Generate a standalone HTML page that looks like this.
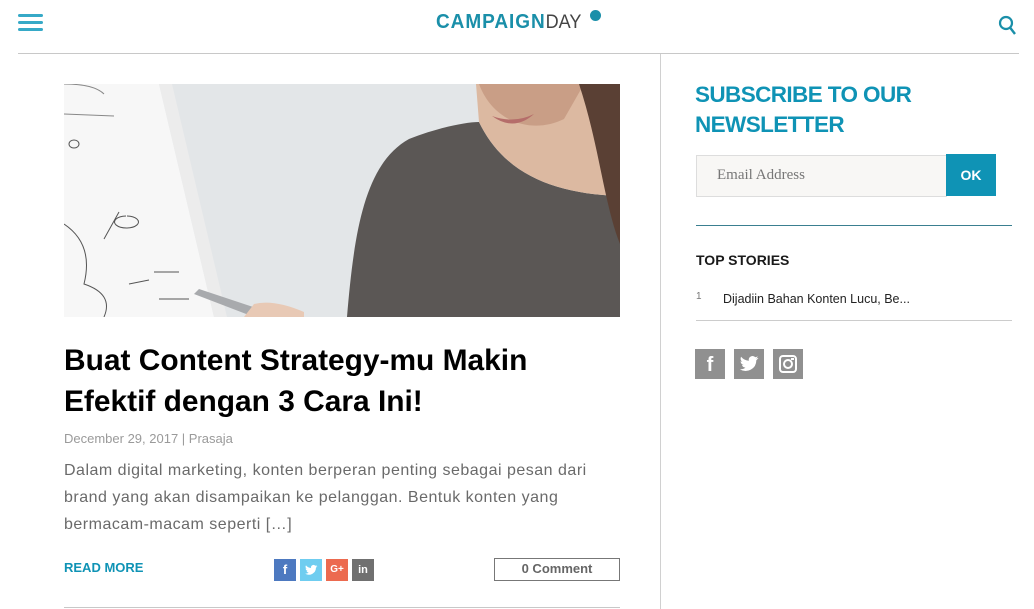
<!DOCTYPE html>
<html><head><meta charset="utf-8"><style>
*{margin:0;padding:0;box-sizing:border-box}
body{width:1034px;height:609px;overflow:hidden;background:#fff;font-family:"Liberation Sans",sans-serif;position:relative}
.a{position:absolute}
</style></head><body>
<!-- header -->
<div class="a" style="left:18px;top:14px;width:25px;height:3px;background:#36a9c7;border-radius:2px"></div>
<div class="a" style="left:18px;top:21px;width:25px;height:3px;background:#36a9c7;border-radius:2px"></div>
<div class="a" style="left:18px;top:28px;width:25px;height:3px;background:#36a9c7;border-radius:2px"></div>
<div class="a" style="left:436px;top:11px;font-size:20px;font-weight:bold;letter-spacing:1px;color:#1a8fa9;line-height:22px;transform:scaleX(0.95);transform-origin:left">CAMPAIGN<span style="font-weight:normal;color:#444;font-size:19px;letter-spacing:0">DAY</span></div>
<div class="a" style="left:590px;top:10px;width:11px;height:11px;border-radius:50%;background:#1a8fa9"></div>
<svg class="a" style="left:998px;top:15px" width="20" height="22"><circle cx="8" cy="8" r="6" fill="none" stroke="#1a8fa9" stroke-width="2.2"/><line x1="12" y1="12.5" x2="17" y2="19" stroke="#1a8fa9" stroke-width="2.4"/></svg>
<div class="a" style="left:18px;top:53px;width:1001px;height:1px;background:#c8c8c8"></div>
<div class="a" style="left:660px;top:54px;width:1px;height:555px;background:#d0d0d0"></div>
<!-- image -->
<svg class="a" style="left:64px;top:84px" width="556" height="233" viewBox="0 0 556 233">
<rect width="556" height="233" fill="#e3e6e8"/>
<polygon points="0,0 95,0 150,233 0,233" fill="#f7f7f7"/>
<polygon points="95,0 108,0 163,233 150,233" fill="#ececec"/>
<g stroke="#555" fill="none" stroke-width="1">
<ellipse cx="10" cy="60" rx="5" ry="4"/><path d="M40,155 L55,128 M62,132 a12,6 0 1,0 1,0 M65,200 L85,196 M90,188 l25,0 M95,215 l30 0"/><path d="M0,140 q30,20 20,60 q30,10 20,33"/></g>
<path d="M0,0 q30,0 40,10 M0,30 l50,2" stroke="#888" fill="none"/>
<polygon points="135,205 195,225 190,233 130,210" fill="#a8aaad"/>
<path d="M190,220 q20,-5 50,8 l0,5 l-60,0z" fill="#e8c9b5"/>
<path d="M283,233 C290,150 300,80 345,55 C370,45 400,38 415,38 C440,90 490,110 556,112 L556,233Z" fill="#5b5755"/>
<path d="M415,38 C440,90 490,110 556,112 L556,0 L412,0Z" fill="#dcb9a1"/>
<path d="M415,0 C430,40 470,50 500,35 L520,0Z" fill="#c99e86"/>
<path d="M428,32 q22,8 42,-2 q-20,18 -42,2z" fill="#b56d6a"/>
<path d="M515,0 L556,0 L556,160 C540,120 535,60 515,0Z" fill="#5a4034"/>
</svg>
<!-- article -->
<div class="a" style="left:64px;top:340px;font-size:29.9px;font-weight:bold;line-height:41px;color:#000;white-space:nowrap">Buat Content Strategy-mu Makin<br>Efektif dengan 3 Cara Ini!</div>
<div class="a" style="left:64px;top:431px;font-size:13px;color:#9a9a9a">December 29, 2017 | Prasaja</div>
<div class="a" style="left:64px;top:457px;font-size:16px;line-height:27px;color:#6a6a6a;letter-spacing:0.5px;white-space:nowrap">Dalam digital marketing, konten berperan penting sebagai pesan dari<br>brand yang akan disampaikan ke pelanggan. Bentuk konten yang<br>bermacam-macam seperti […]</div>
<div class="a" style="left:64px;top:560px;font-size:13px;font-weight:bold;color:#0f93b5">READ MORE</div>
<div class="a" style="left:274px;top:559px;width:22px;height:22px;background:#4d79c0;color:#fff;font-size:13px;font-weight:bold;text-align:center;line-height:22px">f</div>
<div class="a" style="left:300px;top:559px;width:22px;height:22px;background:#6fcdf0"><svg width="22" height="22" viewBox="0 0 24 24"><path transform="translate(5 5) scale(.6)" fill="#fff" d="M23 4.6c-.8.4-1.700.6-2.600.7.9-.6 1.600-1.400 2-2.500-.9.5-1.900.9-2.900 1.100A4.5 4.5 0 0 0 11.800 8 12.800 12.800 0 0 1 2.500 3.300a4.500 4.500 0 0 0 1.400 6c-.7 0-1.400-.2-2-.6 0 2.200 1.600 4 3.600 4.400-.7.2-1.400.2-2 .1.6 1.800 2.200 3.100 4.200 3.100A9 9 0 0 1 1 18.200 12.800 12.800 0 0 0 20.700 7.400c.9-.6 1.600-1.400 2.300-2.300z"/></svg></div>
<div class="a" style="left:326px;top:559px;width:22px;height:22px;background:#ec6a4f;color:#fff;font-size:10px;font-weight:bold;text-align:center;line-height:22px">G+</div>
<div class="a" style="left:352px;top:559px;width:22px;height:22px;background:#707070;color:#fff;font-size:11px;font-weight:bold;text-align:center;line-height:22px">in</div>
<div class="a" style="left:494px;top:558px;width:126px;height:23px;border:1.5px solid #777;font-size:13px;font-weight:bold;color:#666;text-align:center;line-height:20px">0 Comment</div>
<div class="a" style="left:64px;top:607px;width:556px;height:1px;background:#c8c8c8"></div>
<!-- sidebar -->
<div class="a" style="left:695px;top:80px;font-size:22.5px;font-weight:bold;line-height:30px;letter-spacing:-0.6px;color:#0f93b5">SUBSCRIBE TO OUR<br>NEWSLETTER</div>
<div class="a" style="left:696px;top:155px;width:251px;height:42px;background:#f8f7f5;border:1px solid #ddd;font-family:'Liberation Serif',serif;font-size:15px;color:#777;padding:11px 0 0 20px">Email Address</div>
<div class="a" style="left:946px;top:154px;width:50px;height:42px;background:#0f93b5;color:#fff;font-weight:bold;font-size:14px;text-align:center;line-height:42px">OK</div>
<div class="a" style="left:696px;top:225px;width:316px;height:1px;background:#3a7f90"></div>
<div class="a" style="left:696px;top:252px;font-size:14px;font-weight:bold;color:#1a1a1a">TOP STORIES</div>
<div class="a" style="left:696px;top:291px;font-size:10px;color:#777">1</div>
<div class="a" style="left:723px;top:292px;font-size:12.5px;color:#222">Dijadiin Bahan Konten Lucu, Be...</div>
<div class="a" style="left:696px;top:320px;width:316px;height:1px;background:#ccc"></div>
<div class="a" style="left:695px;top:349px;width:30px;height:30px;background:#909090;color:#fff;font-size:20px;font-weight:bold;text-align:center;line-height:32px">f</div>
<div class="a" style="left:734px;top:349px;width:30px;height:30px;background:#909090"><svg width="30" height="30" viewBox="0 0 24 24"><path transform="translate(4 4) scale(.67)" fill="#fff" d="M23 4.6c-.8.4-1.7.6-2.6.7.9-.6 1.6-1.4 2-2.5-.9.5-1.9.9-2.9 1.1A4.5 4.5 0 0 0 11.8 8 12.8 12.8 0 0 1 2.5 3.3a4.5 4.5 0 0 0 1.4 6c-.7 0-1.4-.2-2-.6 0 2.2 1.6 4 3.6 4.4-.7.2-1.4.2-2 .1.6 1.8 2.2 3.1 4.2 3.1A9 9 0 0 1 1 18.2 12.8 12.8 0 0 0 20.7 7.4c.9-.6 1.6-1.4 2.3-2.3z"/></svg></div>
<div class="a" style="left:773px;top:349px;width:30px;height:30px;background:#909090"><svg width="30" height="30"><rect x="7" y="7" width="16" height="16" rx="3" fill="none" stroke="#fff" stroke-width="2"/><circle cx="15" cy="15" r="4" fill="none" stroke="#fff" stroke-width="2"/><rect x="18" y="9" width="3" height="2" fill="#fff"/></svg></div>
</body></html>
